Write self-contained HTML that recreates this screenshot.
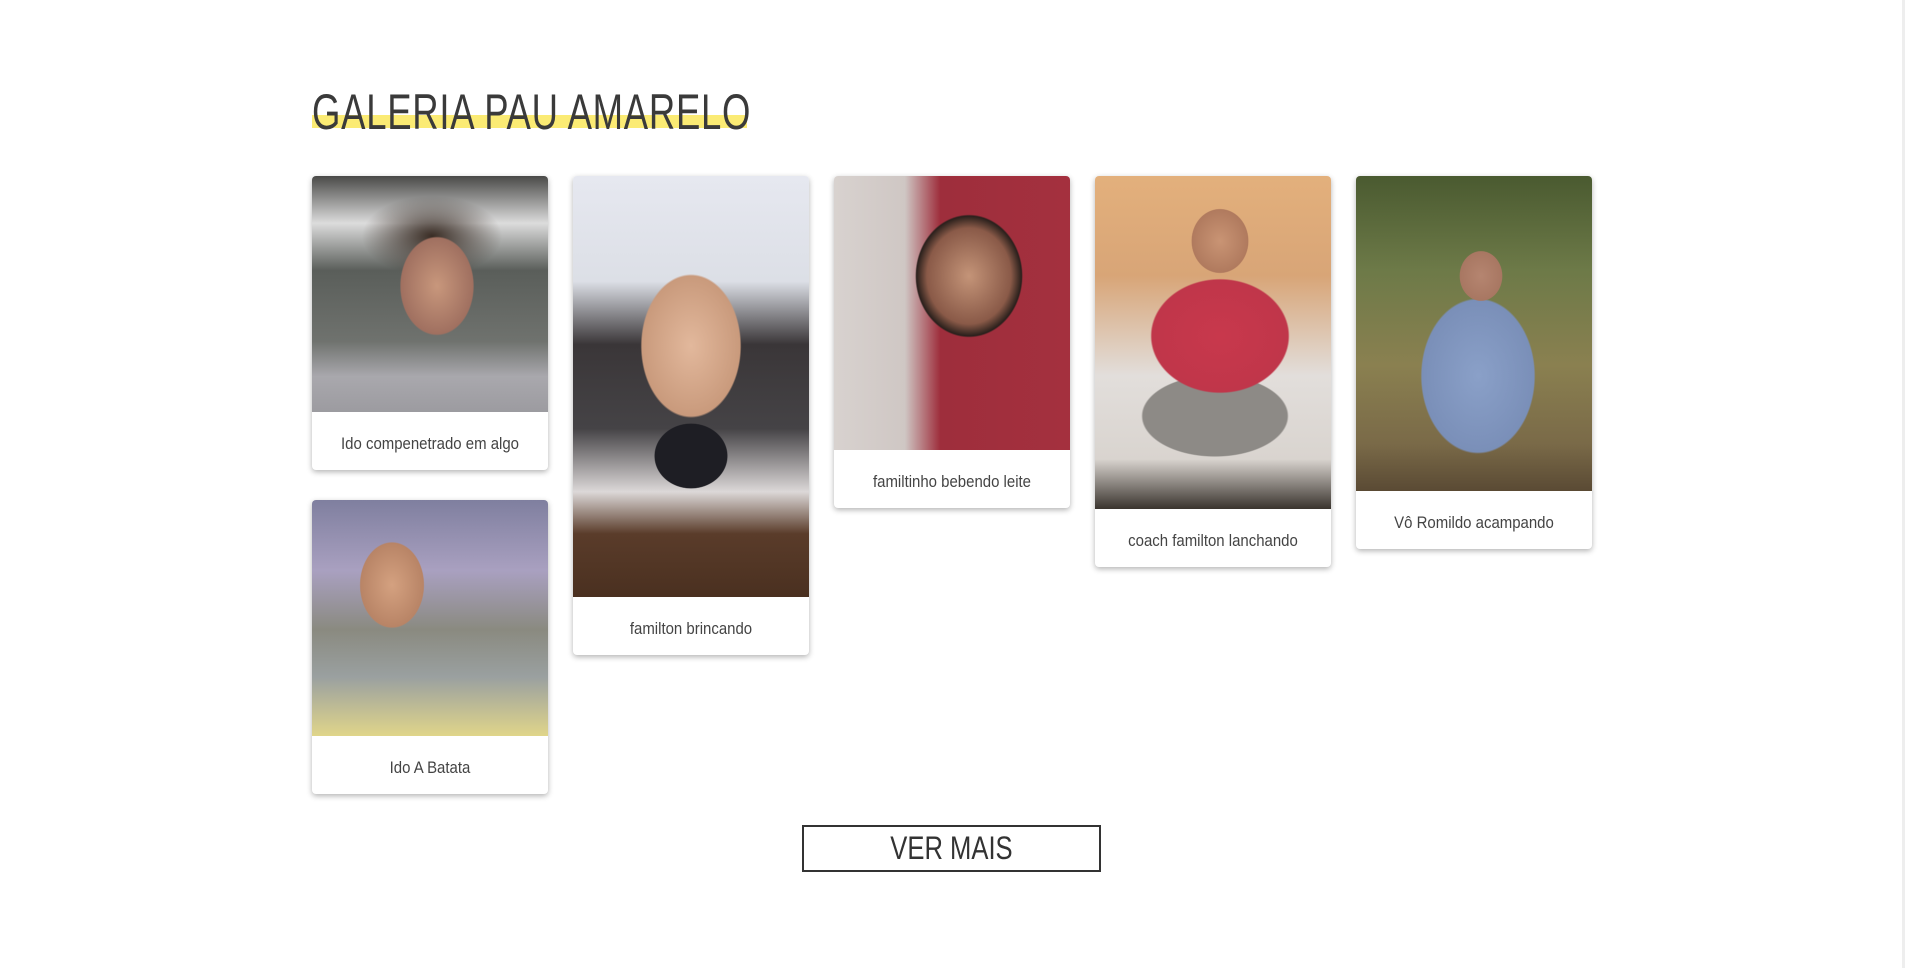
<!DOCTYPE html>
<html><head><meta charset="utf-8"><style>
*{margin:0;padding:0;box-sizing:border-box}
body{width:1905px;height:968px;background:#fff;position:relative;overflow:hidden;font-family:"Liberation Sans Narrow","Liberation Sans",sans-serif}
h1{position:absolute;left:312px;top:84px;font-weight:normal;font-size:50px;color:#3a3a3a;letter-spacing:1px;white-space:nowrap;transform-origin:left top;transform:scaleX(.73);line-height:56px}
.hl{position:absolute;left:312px;top:115px;width:435px;height:13px;background:#fbeb74}
.card{position:absolute;width:236px;background:#fff;border-radius:4px;box-shadow:0 2px 6px rgba(0,0,0,.3);overflow:hidden}
.card .img{width:236px}
.card .cap{text-align:center;font-size:17px;color:#444;display:flex;align-items:center;justify-content:center;height:58px;padding-top:6px;transform:scaleX(.88)}
.btn{position:absolute;left:802px;top:825px;width:299px;height:47px;border:2px solid #333;text-align:center;font-size:32px;line-height:43px;color:#333}
.btn span{display:inline-block;transform:scaleX(.8)}
.sb{position:absolute;right:0;top:0;width:3px;height:968px;background:#eee}
</style></head><body>
<div class="hl"></div>
<h1>GALERIA PAU AMARELO</h1>

<div class="card" style="left:312px;top:176px"><div class="img" style="height:236px;background:radial-gradient(ellipse 60px 80px at 125px 110px,#c8977c 0,#a07060 60%,transparent 62%),radial-gradient(ellipse 70px 40px at 120px 60px,#3a2d25 0,transparent 100%),linear-gradient(180deg,#4a4a48 0,#dcdcdc 20%,#5a5e5a 40%,#6f726e 70%,#a9a8ad 85%,#9c9ba0 100%)"></div><div class="cap">Ido compenetrado em algo</div></div>

<div class="card" style="left:312px;top:500px"><div class="img" style="height:236px;background:radial-gradient(ellipse 45px 60px at 80px 85px,#d4a180 0,#b88466 70%,transparent 72%),linear-gradient(180deg,#7f7f9f 0,#a9a0c0 30%,#8a8a80 55%,#9aa0a0 75%,#e0d58a 100%)"></div><div class="cap">Ido A Batata</div></div>

<div class="card" style="left:573px;top:176px"><div class="img" style="height:421px;background:radial-gradient(ellipse 70px 100px at 118px 170px,#e2b89c 0,#c99a7c 70%,transparent 72%),radial-gradient(ellipse 45px 40px at 118px 280px,#1e1e24 0,#1e1e24 80%,transparent 82%),linear-gradient(180deg,#e6e8f0 0,#dcdfe6 25%,#3a3638 40%,#454346 60%,#dcd8d8 75%,#5a3c2a 85%,#4a3020 100%)"></div><div class="cap">familton brincando</div></div>

<div class="card" style="left:834px;top:176px"><div class="img" style="height:274px;background:radial-gradient(ellipse 70px 80px at 135px 100px,#c49478 0,#8a5a48 60%,#2a201c 75%,transparent 77%),linear-gradient(90deg,#d8d2cf 0,#cfc7c4 30%,#9e2e3c 45%,#a4303e 100%)"></div><div class="cap">familtinho bebendo leite</div></div>

<div class="card" style="left:1095px;top:176px"><div class="img" style="height:333px;background:radial-gradient(ellipse 40px 45px at 125px 65px,#c99474 0,#b07a5e 70%,transparent 72%),radial-gradient(ellipse 85px 70px at 125px 160px,#c8384c 0,#c0364a 80%,transparent 82%),radial-gradient(ellipse 90px 50px at 120px 240px,#8d8a86 0,#8d8a86 80%,transparent 82%),linear-gradient(180deg,#e3b07c 0,#d8a577 30%,#e2dedb 60%,#d9d4cf 85%,#3a342e 100%)"></div><div class="cap">coach familton lanchando</div></div>

<div class="card" style="left:1356px;top:176px"><div class="img" style="height:315px;background:radial-gradient(ellipse 30px 35px at 125px 100px,#b58570 0,#a87762 70%,transparent 72%),radial-gradient(ellipse 70px 95px at 122px 200px,#8aa0c8 0,#7a8fb8 80%,transparent 82%),linear-gradient(180deg,#4a5a30 0,#6d7a48 30%,#8a8050 60%,#7a6a48 85%,#5a4a34 100%)"></div><div class="cap">Vô Romildo acampando</div></div>

<div class="btn"><span>VER MAIS</span></div>
<div class="sb"></div>
</body></html>
